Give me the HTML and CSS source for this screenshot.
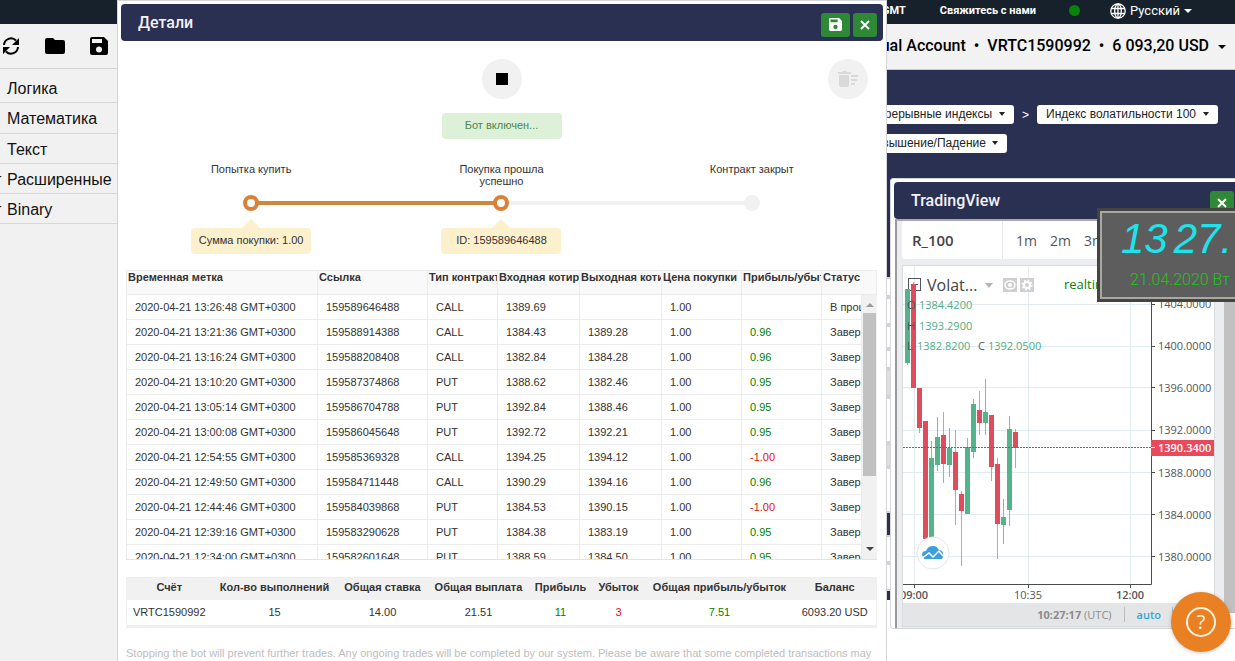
FILE: index.html
```html
<!DOCTYPE html>
<html lang="ru">
<head>
<meta charset="utf-8">
<title>Binary Bot</title>
<link rel="stylesheet" href="styles.css">
</head>
<body>
<svg class="defs" aria-hidden="true">
  <symbol id="floppy" viewBox="0 0 18 18"><path fill-rule="evenodd" d="M2 0h12l4 4v12a2 2 0 0 1-2 2H2a2 2 0 0 1-2-2V2a2 2 0 0 1 2-2zM2 2v4h10V2zM9 9.500a3 3 0 1 0 0 6a3 3 0 1 0 0-6z"/></symbol>
  <symbol id="cross" viewBox="0 0 10 10"><path d="M1 1l8 8M9 1l-8 8" fill="none" stroke="currentColor" stroke-width="2"/></symbol>
</svg>

<div class="page">
  <header class="topbar">
    <span class="gmt">2020-04-21 10:27:17 GMT</span>
    <a class="contact" href="#">Свяжитесь с нами</a>
    <span class="online"></span>
    <button class="lang" type="button">
      <svg class="globe" viewBox="0 0 16 16" aria-hidden="true"><g fill="none" stroke="currentColor" stroke-width="1.300"><circle cx="8" cy="8" r="7.200"/><ellipse cx="8" cy="8" rx="3.300" ry="7.200"/><path d="M8 1v14M1.500 5.500h13M1.500 10.500h13"/></g></svg>
      Русский <span class="caret"></span>
    </button>
  </header>
  <div class="account">
    <button class="account-button" type="button">Virtual Account&nbsp; • &nbsp;VRTC1590992&nbsp; • &nbsp;6 093,20 USD <span class="caret"></span></button>
  </div>

  <div class="workspace">
    <nav class="toolbox">
      <div class="tools">
        <button type="button" aria-label="Сброс"><svg width="18" height="18" viewBox="0 0 18 18" aria-hidden="true"><path d="M2 8a7 7 0 0 1 12-4.500M16 10a7 7 0 0 1-12 4.500" fill="none" stroke="#000" stroke-width="2"/><path d="M17 1v7h-7zM1 17v-7h7z"/></svg></button>
        <button type="button" aria-label="Открыть"><svg width="20" height="16" viewBox="0 0 20 16" aria-hidden="true"><path d="M2 0h6l2 2h8a2 2 0 0 1 2 2v10a2 2 0 0 1-2 2H2a2 2 0 0 1-2-2V2a2 2 0 0 1 2-2z"/></svg></button>
        <button type="button" aria-label="Сохранить"><svg width="18" height="18" aria-hidden="true"><use href="#floppy"/></svg></button>
      </div>
      <ul class="categories">
        <li>Логика</li>
        <li>Математика</li>
        <li>Текст</li>
        <li class="parent">Расширенные</li>
        <li class="parent">Binary</li>
      </ul>
    </nav>
    <main class="canvas">
      <div class="block">
        <div class="block-row">
          <label class="pick"><select aria-label="Рынок"><option>Непрерывные индексы</option></select></label>
          <span class="sep">&gt;</span>
          <label class="pick"><select aria-label="Актив"><option>Индекс волатильности 100</option></select></label>
        </div>
        <div class="block-row second">
          <label class="pick"><select aria-label="Тип"><option>Повышение/Падение</option></select></label>
        </div>
      </div>
      <div class="slot s20"></div>
      <div class="slot s28"></div>
      <div class="slot s24"></div>
      <div class="slot s20"></div>
      <div class="slot s28 shade"></div>
      <div class="slot s46"></div>
      <div class="slot s24 shade"></div>
      <div class="slot s46"></div>
      <div class="bar"></div>
      <div class="slot s28"></div>
      <div class="slot s28"></div>
      <div class="bar thin"></div>
    </main>
  </div>

  <section class="window details">
    <header class="window-head">
      <h2>Детали</h2>
      <button class="green wide" type="button" aria-label="Сохранить"><svg width="13" height="13" aria-hidden="true"><use href="#floppy"/></svg></button>
      <button class="green" type="button" aria-label="Закрыть"><svg width="10" height="10" aria-hidden="true"><use href="#cross"/></svg></button>
    </header>
    <div class="details-body">
      <div class="controls">
        <button class="round stop" type="button" aria-label="Стоп"><span class="square"></span></button>
        <button class="round clear" type="button" aria-label="Очистить" disabled><svg width="20" height="16" viewBox="0 0 20 16" fill="#d9d9d9" aria-hidden="true"><path d="M0 1h4l1-1h3l1 1h4v2H0zM1 4h10v10a2 2 0 0 1-2 2H3a2 2 0 0 1-2-2zM13 4h7v2h-7zM13 8h6v2h-6zM13 12h4v2h-4z"/></svg></button>
      </div>
      <div class="status">Бот включен...</div>
      <ol class="steps">
        <li class="step done next"><span class="step-label">Попытка купить</span><span class="dot"></span><span class="tip">Сумма покупки: 1.00</span></li>
        <li class="step done"><span class="step-label">Покупка прошла успешно</span><span class="dot"></span><span class="tip">ID: 159589646488</span></li>
        <li class="step"><span class="step-label">Контракт закрыт</span><span class="dot"></span></li>
      </ol>

      <div class="log">
        <table class="grid grid-head">
          <colgroup><col class="c-time"><col class="c-ref"><col class="c-type"><col class="c-spot"><col class="c-spot"><col class="c-price"><col class="c-price"><col></colgroup>
          <thead><tr><th>Временная метка</th><th>Ссылка</th><th>Тип контракта</th><th>Входная котировка</th><th>Выходная котировка</th><th>Цена покупки</th><th>Прибыль/убыток</th><th>Статус</th></tr></thead>
        </table>
        <div class="log-body">
          <div class="log-rows">
          <table class="grid">
            <colgroup><col class="c-time"><col class="c-ref"><col class="c-type"><col class="c-spot"><col class="c-spot"><col class="c-price"><col class="c-price"><col></colgroup>
            <tbody>
              <tr><td>2020-04-21 13:26:48 GMT+0300</td><td>159589646488</td><td>CALL</td><td>1389.69</td><td></td><td>1.00</td><td></td><td>В процессе</td></tr>
              <tr><td>2020-04-21 13:21:36 GMT+0300</td><td>159588914388</td><td>CALL</td><td>1384.43</td><td>1389.28</td><td>1.00</td><td class="win">0.96</td><td>Завершено</td></tr>
              <tr><td>2020-04-21 13:16:24 GMT+0300</td><td>159588208408</td><td>CALL</td><td>1382.84</td><td>1384.28</td><td>1.00</td><td class="win">0.96</td><td>Завершено</td></tr>
              <tr><td>2020-04-21 13:10:20 GMT+0300</td><td>159587374868</td><td>PUT</td><td>1388.62</td><td>1382.46</td><td>1.00</td><td class="win">0.95</td><td>Завершено</td></tr>
              <tr><td>2020-04-21 13:05:14 GMT+0300</td><td>159586704788</td><td>PUT</td><td>1392.84</td><td>1388.46</td><td>1.00</td><td class="win">0.95</td><td>Завершено</td></tr>
              <tr><td>2020-04-21 13:00:08 GMT+0300</td><td>159586045648</td><td>PUT</td><td>1392.72</td><td>1392.21</td><td>1.00</td><td class="win">0.95</td><td>Завершено</td></tr>
              <tr><td>2020-04-21 12:54:55 GMT+0300</td><td>159585369328</td><td>CALL</td><td>1394.25</td><td>1394.12</td><td>1.00</td><td class="loss">-1.00</td><td>Завершено</td></tr>
              <tr><td>2020-04-21 12:49:50 GMT+0300</td><td>159584711448</td><td>CALL</td><td>1390.29</td><td>1394.16</td><td>1.00</td><td class="win">0.96</td><td>Завершено</td></tr>
              <tr><td>2020-04-21 12:44:46 GMT+0300</td><td>159584039868</td><td>PUT</td><td>1384.53</td><td>1390.15</td><td>1.00</td><td class="loss">-1.00</td><td>Завершено</td></tr>
              <tr><td>2020-04-21 12:39:16 GMT+0300</td><td>159583290628</td><td>PUT</td><td>1384.38</td><td>1383.19</td><td>1.00</td><td class="win">0.95</td><td>Завершено</td></tr>
              <tr><td>2020-04-21 12:34:00 GMT+0300</td><td>159582601648</td><td>PUT</td><td>1388.59</td><td>1384.50</td><td>1.00</td><td class="win">0.95</td><td>Завершено</td></tr>
            </tbody>
          </table>
          </div>
          <div class="scroll"><span class="up"></span><span class="thumb"></span><span class="down"></span></div>
        </div>
      </div>

      <table class="summary">
        <colgroup><col class="s-account"><col class="s-runs"><col class="s-stake"><col class="s-payout"><col class="s-win"><col class="s-loss"><col class="s-total"><col></colgroup>
        <thead><tr><th>Счёт</th><th>Кол-во выполнений</th><th>Общая ставка</th><th>Общая выплата</th><th>Прибыль</th><th>Убыток</th><th>Общая прибыль/убыток</th><th>Баланс</th></tr></thead>
        <tbody><tr><td>VRTC1590992</td><td>15</td><td>14.00</td><td>21.51</td><td class="win">11</td><td class="loss">3</td><td class="win">7.51</td><td>6093.20 USD</td></tr></tbody>
      </table>
      <p class="note">Stopping the bot will prevent further trades. Any ongoing trades will be completed by our system. Please be aware that some completed transactions may</p>
    </div>
  </section>

  <section class="window trading">
    <header class="window-head">
      <h2>TradingView</h2>
      <button class="green" type="button" aria-label="Закрыть"><svg width="10" height="10" aria-hidden="true"><use href="#cross"/></svg></button>
    </header>
    <div class="frame">
      <div class="widget">
        <div class="intervals">
          <strong>R_100</strong>
          <button type="button">1m</button><button type="button">2m</button><button type="button">3m</button>
        </div>
        <div class="chart">
          <svg class="plot" viewBox="903 266 312 337" width="312" height="337" role="img" aria-label="R_100">
            <g stroke="#e1ecf0"><path d="M903 304.500h248M903 346.500h248M903 387.500h248M903 430.500h248M903 472.500h248M903 514.500h248M903 556.500h248M914.500 266v318M1028.500 266v318M1130.500 266v318"/></g>
            <g fill="none" stroke="#555"><rect x="908.500" y="278.500" width="12" height="12"/><path d="M911 284.500h7"/></g>
            <text class="name" x="927" y="291">Volat...</text>
            <path d="M985 283h8l-4 5z" fill="#b5b5b5"/>
            <path d="M1003 278h14v14h-14zM1020 278h14v14h-14z" fill="#cfcfcf"/>
            <g fill="none" stroke="#fff"><ellipse cx="1010" cy="285" rx="5" ry="4" stroke-width="1.500"/><circle cx="1010" cy="285" r="1" stroke-width="2"/><circle cx="1027" cy="285" r="3" stroke-width="2"/><circle cx="1027" cy="285" r="4.500" stroke-width="2" stroke-dasharray="1.800 1.730"/></g>
            <text class="live" x="1064" y="289">realtime</text>
            <g stroke="#8fb5a5"><path d="M907.500 289v76M931.500 441v20M937.500 417v54M949.500 428v49M967.500 438v76M973.500 399v59M985.500 379v56M1003.500 499v45M1009.500 416v110"/></g>
            <g stroke="#dd96a0"><path d="M913.500 282v20M919.500 388v45M943.500 412v71M955.500 430v95M961.500 491v75M979.500 391v44M991.500 415v66M997.500 458v101M1015.500 429v39"/></g>
            <path fill="#53b38a" d="M905 289h5v74h-5zM929 458h5v79h-5zM935 437h5v28h-5zM947 448h5v17h-5zM965 447h5v67h-5zM971 404h5v48h-5zM983 412h5v11h-5zM1001 517h5v8h-5zM1007 429h5v81h-5z"/>
            <path fill="#df4c5b" d="M911 284h5v104h-5zM917 388h5v40h-5zM923 421h5v118h-5zM941 435h5v29h-5zM953 452h5v38h-5zM959 494h5v17h-5zM977 410h5v13h-5zM989 415h5v52h-5zM995 464h5v60h-5zM1013 432h5v16h-5z"/>
            <g class="ohlc">
              <text x="907" y="309">O</text><text class="g" x="919" y="309">1384.4200</text>
              <text x="907" y="330">H</text><text class="g" x="919" y="330">1393.2900</text>
              <text x="907" y="350">L</text><text class="g" x="917" y="350">1382.8200</text>
              <text x="978" y="350">C</text><text class="g" x="988" y="350">1392.0500</text>
            </g>
            <path d="M903 447.500h248" stroke="#d23c4b" stroke-dasharray="2 1"/>
            <path d="M1151.500 266v318.500H903M1151 304.500h4M1151 346.500h4M1151 387.500h4M1151 430.500h4M1151 472.500h4M1151 514.500h4M1151 556.500h4M914.500 585v3M1028.500 585v3M1130.500 585v3" fill="none" stroke="#4c4c4c"/>
            <g class="axis"><text x="1158" y="308">1404.0000</text><text x="1158" y="350">1400.0000</text><text x="1158" y="392">1396.0000</text><text x="1158" y="434">1392.0000</text><text x="1158" y="477">1388.0000</text><text x="1158" y="519">1384.0000</text><text x="1158" y="561">1380.0000</text></g>
            <path d="M1151 440h64v16h-64z" fill="#e84a5c"/>
            <path d="M1151 447.500h4" stroke="#fff"/>
            <text class="price" x="1158" y="452">1390.3400</text>
            <g class="axis mid"><text class="b" x="914" y="599">09:00</text><text x="1028" y="599">10:35</text><text class="b" x="1130" y="599">12:00</text></g>
            <circle cx="933" cy="553" r="16" fill="#fff" stroke="#e6e6e6"/>
            <path d="M922 555q0-4 4-4q2-5 7-5q4 0 6 4q5 0 4 7l-1 2h-18z" fill="#3b9fdd"/>
            <path d="M921 559l8-6l4 4l6-6l4 5" fill="none" stroke="#fff" stroke-width="1.500"/>
          </svg>
          <div class="chart-foot"><span><b>10:27:17</b> (UTC)</span><button type="button">auto</button></div>
        </div>
      </div>
      <div class="outer-scroll"><span></span></div>
    </div>
  </section>

  <aside class="clock">
    <time class="digits"><span>13</span><span>27.</span></time>
    <span class="date">21.04.2020 Вт</span>
  </aside>

  <button class="help" type="button" aria-label="Помощь"><span>?</span></button>
</div>
</body>
</html>
```
FILE: styles.css
```css
* { box-sizing: border-box; }
body { margin: 0; font-family: "Liberation Sans", Arial, sans-serif; color: #333; }
button { font: inherit; color: inherit; border: 0; background: none; padding: 0; }
ul, ol { list-style: none; margin: 0; padding: 0; }
h2, p { margin: 0; }
svg { display: block; }
.defs { display: none; }
.page { position: relative; display: flex; flex-direction: column; height: 100vh; overflow: hidden; background: #fff; }
.caret { display: inline-block; border: 4px solid transparent; border-top-color: currentColor; border-bottom: 0; vertical-align: middle; }

/* Top bars */
.topbar { display: flex; align-items: center; justify-content: flex-end; height: 24px; padding: 0 43px 3px 0; background: #16212c; color: #fff; font: 700 11px Roboto, sans-serif; white-space: nowrap; }
.contact { margin-left: 34px; color: inherit; text-decoration: none; }
.online { width: 11px; height: 11px; margin: 0 30px 0 33px; border-radius: 50%; background: #078407; }
.lang { display: flex; align-items: center; gap: 4px; font: 400 13px Roboto, sans-serif; }
.globe { width: 16px; height: 16px; }
.account { display: flex; justify-content: flex-end; height: 46px; padding: 0 9px 2px 0; background: #f2f2f2; border-bottom: 1px solid #c9c9d2; }
.account-button { color: #000; font: 500 16px Roboto, sans-serif; white-space: nowrap; }
.account .caret { margin-left: 5px; }

/* Workspace */
.workspace { display: flex; flex: 1; min-height: 0; }
.toolbox { width: 118px; margin-top: -46px; background: #f1f1f1; border-right: 1px solid #d6d6d6; }
.tools { display: flex; align-items: center; justify-content: space-between; height: 45px; padding: 0 9px 0 2px; border-bottom: 1px solid #d4d4d4; }
.categories { padding-top: 4px; color: #111; font-size: 16px; }
.categories li { position: relative; height: 30px; padding-left: 7px; line-height: 31px; border-bottom: 1px solid #d8d8d8; }
.categories li:nth-child(2) { height: 31px; }
.parent::before { content: ""; position: absolute; left: -6px; top: 12px; border: 4px solid transparent; border-top: 3px solid #222; border-bottom: 0; }
.canvas { flex: 1; min-width: 0; }
.block { height: 207px; padding-top: 35px; background: #2a3052; }
.block-row { display: flex; align-items: center; justify-content: flex-end; gap: 8px; padding-right: 17px; }
.block-row.second { margin-top: 10px; padding-right: 228px; }
.sep { color: #fff; font-size: 12px; }
.pick { display: flex; align-items: center; height: 19px; padding: 0 9px 2px; border-radius: 3px; background: #fff; color: #222; }
.pick select { appearance: none; border: 0; padding: 0; background: none; font: 12px "Liberation Sans", Arial, sans-serif; color: inherit; }
.pick::after { content: ""; margin-left: 6px; border: 3px solid transparent; border-top: 4px solid #222; border-bottom: 0; }
.slot { border: 2px solid #d3d3d3; background: #fff; }
.shade { background: #dedede; }
.s20 { height: 20px; }
.s24 { height: 24px; }
.s28 { height: 28px; }
.s46 { height: 46px; }
.bar { height: 22px; background: #2a3052; }
.bar.thin { height: 9px; }

/* Windows */
.window { position: absolute; background: #fff; border: 1px solid #d5d5da; }
.window-head { display: flex; align-items: center; height: 37px; margin: 3px 3px 0; padding: 0 6px 0 17px; gap: 3px; border-radius: 4px; background: #2a3052; color: #f2f2f8; }
.window-head h2 { flex: 1; font: 500 16px Roboto, sans-serif; }
.green { display: flex; align-items: center; justify-content: center; width: 24px; height: 24px; margin-top: 4px; border-radius: 3px; background: #2e8836; color: #fff; fill: #fff; }
.green.wide { width: 29px; }
.details { top: 0; bottom: -1px; left: 117px; right: 348px; overflow: hidden; }
.details-body { padding: 18px 9px 0 8px; font-size: 11px; }
.controls { display: grid; grid-template-columns: 1fr 40px 1fr; align-items: center; }
.round { display: flex; align-items: center; justify-content: center; width: 40px; height: 40px; border-radius: 50%; background: #f1f1f1; }
.stop { grid-column: 2; }
.clear { grid-column: 3; justify-self: end; margin-right: 9px; }
.square { width: 12px; height: 12px; background: #000; }
.status { width: 120px; margin: 14px auto 24px; padding-bottom: 1px; border-radius: 4px; background: #ddf1d9; color: #4d8550; line-height: 25px; text-align: center; }
.steps { display: grid; grid-template-columns: repeat(3, 1fr); }
.step { position: relative; display: flex; flex-direction: column; align-items: center; height: 91px; text-align: center; }
.step-label { width: 100px; height: 32px; line-height: 12px; }
.dot { position: relative; z-index: 1; width: 16px; height: 16px; border: 4px solid #f1f1f1; border-radius: 50%; background: #f1f1f1; }
.done .dot { border-color: #dc8133; background: #fff; }
.done::after { content: ""; position: absolute; left: 50%; top: 38px; width: 100%; height: 4px; background: #f1f1f1; }
.next::after { background: #cf873f; }
.tip { position: relative; width: 120px; margin-top: 17px; border-radius: 4px; background: #fdf0cd; line-height: 25px; padding-bottom: 1px; }
.tip::before { content: ""; position: absolute; left: 51px; top: -9px; border: 9px solid transparent; border-top: 0; border-bottom-color: #fdf0cd; }

/* Trade log */
.log { height: 290px; margin-top: 16px; border-bottom: 1px solid #e3e3e3; overflow: hidden; }
.grid { width: 100%; table-layout: fixed; border-collapse: separate; border-spacing: 0; }
.grid th, .grid td { height: 25px; padding: 0 0 0 8px; overflow: hidden; border: 0 solid #ececec; border-width: 0 1px 1px 0; text-align: left; white-space: nowrap; }
.grid th { padding: 0 0 11px 1px; border-top-width: 1px; background: #f9f9f9; }
.grid th:first-child, .grid td:first-child { border-left-width: 1px; }
.c-time { width: 192px; }
.c-ref { width: 110px; }
.c-type { width: 70px; }
.c-spot { width: 82px; }
.c-price { width: 80px; }
.log-body { display: flex; height: 264px; overflow: hidden; }
.log-rows { flex: 1; min-width: 0; }
.scroll { display: flex; flex-direction: column; align-items: center; width: 15px; padding: 8px 1px; background: #f1f1f1; }
.up { border: 4px solid transparent; border-top: 0; border-bottom-color: #999; }
.down { margin-top: auto; border: 4px solid transparent; border-bottom: 0; border-top-color: #444; }
.thumb { width: 13px; height: 163px; margin-top: 6px; background: #c1c1c1; }
.win { color: #008000; }
.loss { color: #e01010; }

.summary { width: 100%; margin-top: 17px; table-layout: fixed; border-collapse: collapse; border: 1px solid #efefef; border-bottom: 3px solid #efefef; text-align: center; white-space: nowrap; }
.summary th, .summary td { padding: 0; height: 22px; }
.summary td { height: 27px; }
.summary th { padding-bottom: 3px; background: #f1f1f1; }
.s-account { width: 85px; }
.s-runs { width: 126px; }
.s-stake { width: 90px; }
.s-payout { width: 102px; }
.s-win { width: 62px; }
.s-loss { width: 54px; }
.s-total { width: 148px; }
.note { margin-top: 19px; color: #bdbdbd; line-height: 12px; white-space: nowrap; }

/* TradingView window */
.trading { top: 178px; right: -4px; width: 349px; border-radius: 3px; font-family: "Open Sans", sans-serif; }
.trading .window-head { margin-right: 0; padding-right: 4px; border-radius: 4px 0 0 4px; }
.frame { display: flex; height: 409px; margin-left: 4px; border-left: 2px solid #999; border-top: 2px solid #aaa; background: #ebedf0; }
.widget { flex: 1; min-width: 0; padding: 0 9px 2px 5px; }
.intervals { display: flex; align-items: center; gap: 13px; height: 38px; background: #fff; border-radius: 3px; color: #555; font-size: 14px; overflow: hidden; }
.intervals strong { width: 101px; height: 38px; padding-left: 10px; font-size: 15px; line-height: 38px; font-weight: 600; color: #444; border-right: 1px solid #e6e8ea; }
.chart { margin-top: 6px; border: 1px solid #d9dcdf; background: #fff; overflow: hidden; }
.ohlc, .axis { font-size: 11px; fill: #555; }
.ohlc .g { fill: #4fae84; }
.name { font-size: 16px; fill: #444; }
.live { font-size: 13px; fill: #0a800a; }
.price { font-size: 11px; font-weight: 600; fill: #fff; }
.mid { text-anchor: middle; }
.mid .b { font-weight: 600; }
.chart-foot { display: flex; align-items: center; justify-content: flex-end; gap: 12px; height: 23px; padding-right: 41px; background: #e4e5e7; color: #8c8c8c; font-size: 11px; }
.chart-foot button { padding: 0 11px 0 12px; border-left: 1px solid #bbb; border-right: 1px solid #bbb; color: #35a5d8; font-weight: 600; }
.outer-scroll { width: 14px; background: #fff; }
.outer-scroll span { display: block; height: 392px; background: #c1c1c1; }

/* Desktop clock */
.clock { position: absolute; top: 208px; right: -8px; width: 146px; height: 94px; padding: 6px 0 0 21px; border: 3px solid #444; background: #5d5d5d; box-shadow: inset 0 0 0 2px #aaa9a0; overflow: hidden; white-space: nowrap; }
.digits { display: flex; gap: 6px; color: #1fe3ea; font: italic 42px/44px "Liberation Sans", Arial, sans-serif; }
.date { display: block; margin-top: 9px; padding-left: 9px; color: #1dc41d; font: 300 16px/20px Roboto, sans-serif; }

.help { position: absolute; right: 4px; bottom: 9px; display: flex; align-items: center; justify-content: center; width: 60px; height: 60px; border-radius: 50%; background: #e98024; color: #fff3df; box-shadow: 0 1px 4px #0003; }
.help span { width: 30px; height: 30px; border: 2px solid; border-radius: 50%; font: 20px/26px "Open Sans", sans-serif; }
```
